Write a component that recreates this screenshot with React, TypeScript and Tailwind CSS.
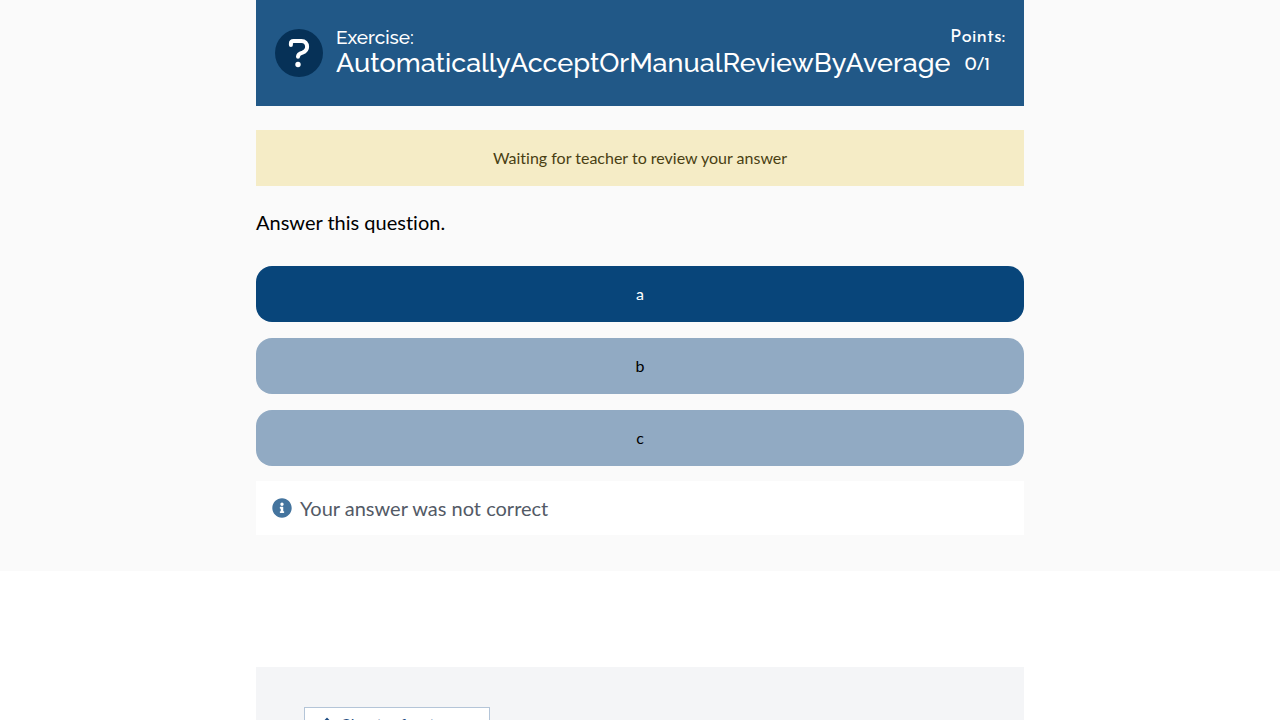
import { useState } from "react";
import { FaArrowUp, FaInfoCircle } from "react-icons/fa";

const options = ["a", "b", "c"];

function QuestionIcon() {
  return (
    <svg viewBox="0 0 48 48" className="size-12 shrink-0" aria-hidden="true">
      <circle cx="24" cy="24" r="24" fill="#063157" />
      <path
        d="M15.9 15.9V14.6Q15.9 12 18.6 12H26.4C30 12 32.1 14.6 32.1 17.8C32.1 20.7 30.4 22.6 27.5 23.6C24.6 24.4 23 25.2 23 27.8"
        fill="none"
        stroke="#fff"
        strokeWidth="4"
        strokeLinecap="round"
        strokeLinejoin="round"
      />
      <circle cx="23" cy="35.5" r="2.7" fill="#fff" />
    </svg>
  );
}

export default function App() {
  const [selected, setSelected] = useState("a");

  return (
    <div className="h-screen overflow-x-hidden overflow-y-auto bg-white font-['Lato',sans-serif] text-black [font-variant-ligatures:none] [scrollbar-width:none]">
      <main className="bg-[#fafafa] pb-9">
        <div className="mx-auto max-w-3xl">
          <header className="flex h-[106px] items-center bg-[#215887] pr-[19px] pl-[19px] text-white">
            <QuestionIcon />
            <h1 className="ml-[13px] min-w-0 flex-1 overflow-hidden font-['Raleway','Open_Sans',sans-serif] font-medium whitespace-nowrap">
              <span className="block text-[19px] leading-5">Exercise:</span>
              <span className="block text-[27px] leading-8">
                AutomaticallyAcceptOrManualReviewByAverage
              </span>
            </h1>
            <div className="flex flex-col items-center pb-0.5 font-['Josefin_Sans','Lato',sans-serif] text-[19px] leading-7">
              <span>Points:</span>
              <span>0/1</span>
            </div>
          </header>
          <p className="mt-6 bg-[#f5ecc6] p-4 text-center text-base text-[#493f13]" role="status">
            Waiting for teacher to review your answer
          </p>
          <h2 className="mt-5 text-xl leading-8">Answer this question.</h2>
          <div className="mt-7 flex flex-col gap-4">
            {options.map((option) => (
              <button
                key={option}
                type="button"
                aria-pressed={selected === option}
                onClick={() => setSelected(option)}
                className={
                  selected === option
                    ? "rounded-2xl bg-[#08457a] p-4 text-base text-white"
                    : "rounded-2xl bg-[#91aac3] p-4 text-base text-black"
                }
              >
                {option}
              </button>
            ))}
          </div>
          <div className="mt-[15px] flex h-[54px] items-center gap-2 bg-white px-4 text-xl text-[#535a66]">
            <FaInfoCircle className="size-5 text-[#44749e]" aria-hidden="true" />
            <p>Your answer was not correct</p>
          </div>
        </div>
      </main>
      <nav className="mx-auto mt-24 max-w-3xl bg-[#f4f5f7] px-12 py-10">
        <a
          href="#chapter"
          className="inline-flex items-center gap-1.5 border border-[#b4c5d8] bg-white py-1 pr-4 pl-[15px] text-base text-[#1f4e83]"
        >
          <FaArrowUp className="size-3.5" aria-hidden="true" />
          Chapter front page
        </a>
      </nav>
    </div>
  );
}
